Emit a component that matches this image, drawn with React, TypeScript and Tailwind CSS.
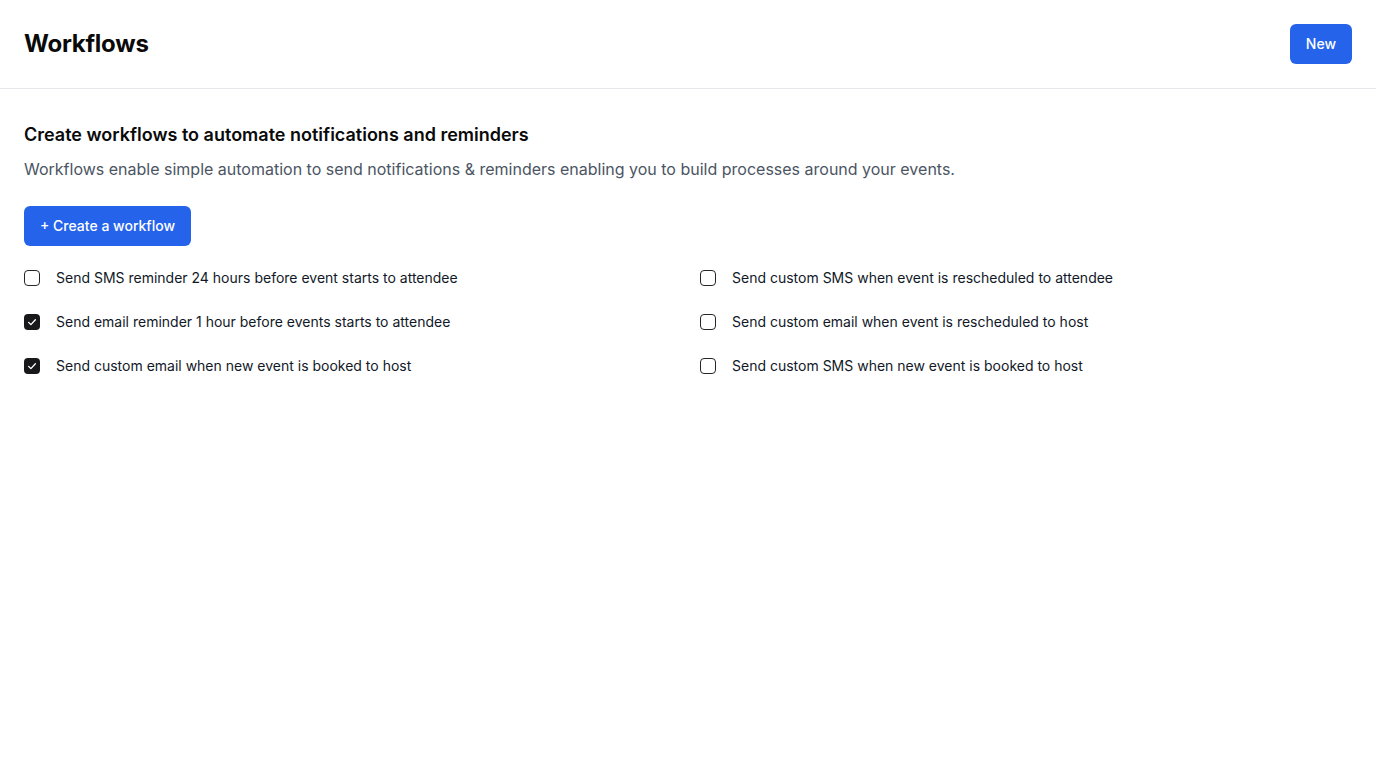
import { useState } from 'react';

const leftItems = [
  { label: 'Send SMS reminder 24 hours before event starts to attendee', checked: false },
  { label: 'Send email reminder 1 hour before events starts to attendee', checked: true },
  { label: 'Send custom email when new event is booked to host', checked: true },
];

const rightItems = [
  { label: 'Send custom SMS when event is rescheduled to attendee', checked: false },
  { label: 'Send custom email when event is rescheduled to host', checked: false },
  { label: 'Send custom SMS when new event is booked to host', checked: false },
];

function CheckRow({ label, initial }: { label: string; initial: boolean }) {
  const [checked, setChecked] = useState(initial);
  return (
    <label className="flex cursor-pointer items-center gap-4 text-sm leading-5 text-[#111827]">
      <button
        type="button"
        onClick={() => setChecked(c => !c)}
        className={
          checked
            ? 'flex h-4 w-4 shrink-0 items-center justify-center rounded-[4px] bg-[#18181b]'
            : 'h-4 w-4 shrink-0 rounded-[4px] border border-[#27272a] bg-white'
        }
      >
        {checked && (
          <svg viewBox="0 0 16 16" className="h-3 w-3" fill="none">
            <path d="M3.5 8.5l3 3 6-6.5" stroke="white" strokeWidth="1.8" strokeLinecap="round" strokeLinejoin="round" />
          </svg>
        )}
      </button>
      <span>{label}</span>
    </label>
  );
}

export default function App() {
  return (
    <div className="min-h-screen bg-white font-['Inter',sans-serif] text-[#0a0a0a]">
      <header className="flex h-[89px] items-center justify-between border-b border-gray-200 px-6">
        <h1 className="text-2xl font-bold tracking-[-0.01em]">Workflows</h1>
        <button className="h-10 rounded-md bg-[#2563eb] px-4 text-sm font-medium text-white">New</button>
      </header>

      <main className="px-6 pt-8">
        <h2 className="text-lg leading-7 font-semibold">Create workflows to automate notifications and reminders</h2>
        <p className="mt-2 text-base leading-6 text-[#4b5563]">
          Workflows enable simple automation to send notifications &amp; reminders enabling you to build processes around your events.
        </p>
        <button className="mt-[25px] h-10 rounded-md bg-[#2563eb] px-4 text-sm font-medium text-white">+ Create a workflow</button>

        <div className="mt-[22px] grid grid-cols-2 gap-x-6">
          <div className="flex flex-col gap-6">
            {leftItems.map(i => (
              <CheckRow key={i.label} label={i.label} initial={i.checked} />
            ))}
          </div>
          <div className="flex flex-col gap-6">
            {rightItems.map(i => (
              <CheckRow key={i.label} label={i.label} initial={i.checked} />
            ))}
          </div>
        </div>
      </main>
    </div>
  );
}
